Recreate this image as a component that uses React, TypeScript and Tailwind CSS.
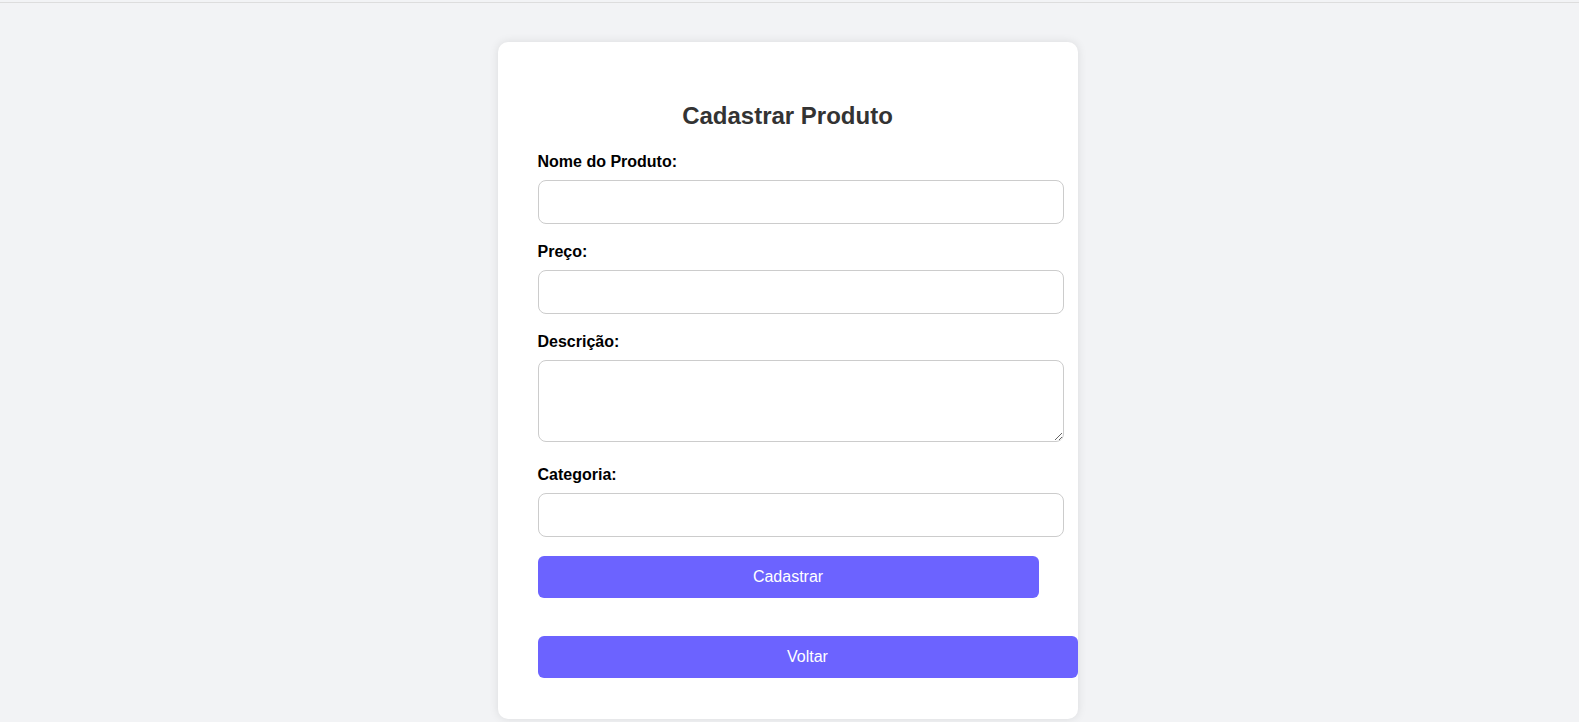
export default function App() {
  const fields = [
    { label: 'Nome do Produto:', type: 'input' },
    { label: 'Preço:', type: 'input' },
    { label: 'Descrição:', type: 'textarea' },
    { label: 'Categoria:', type: 'input' },
  ];

  return (
    <div className="h-screen overflow-hidden bg-[#f2f3f5] font-['Liberation_Sans',Arial,sans-serif]">
      <div className="h-[2px]" />
      <div className="h-px bg-[#dddddd]" />
      <div className="flex justify-center pt-[39px] pr-[4px]">
        <div className="w-[580px] rounded-[10px] bg-white px-10 pt-10 pb-[41px] shadow-[0_0_10px_rgba(0,0,0,0.1)]">
          <h2 className="mt-5 mb-[23px] text-center text-[24px] leading-[normal] font-bold text-[#333333]">
            Cadastrar Produto
          </h2>
          <form onSubmit={(e) => e.preventDefault()}>
            {fields.map((f) => (
              <div key={f.label}>
                <label className="mb-[9px] block text-base leading-[normal] font-bold text-black">
                  {f.label}
                </label>
                {f.type === 'textarea' ? (
                  <textarea className="mb-[24px] block h-[82px] w-[526px] rounded-[8px] border border-[#cccccc] px-3 py-3 text-base outline-none" />
                ) : (
                  <input
                    type="text"
                    className="mb-[19px] block h-[44px] w-[526px] rounded-[8px] border border-[#cccccc] px-3 text-base outline-none"
                  />
                )}
              </div>
            ))}
            <button
              type="submit"
              className="mt-[6px] block h-[42px] w-[501px] rounded-[6px] bg-[#6c63ff] text-base text-white"
            >
              Cadastrar
            </button>
          </form>
          <button
            type="button"
            className="mt-[38px] block h-[42px] w-[540px] rounded-[6px] bg-[#6c63ff] text-base text-white"
          >
            Voltar
          </button>
        </div>
      </div>
    </div>
  );
}
